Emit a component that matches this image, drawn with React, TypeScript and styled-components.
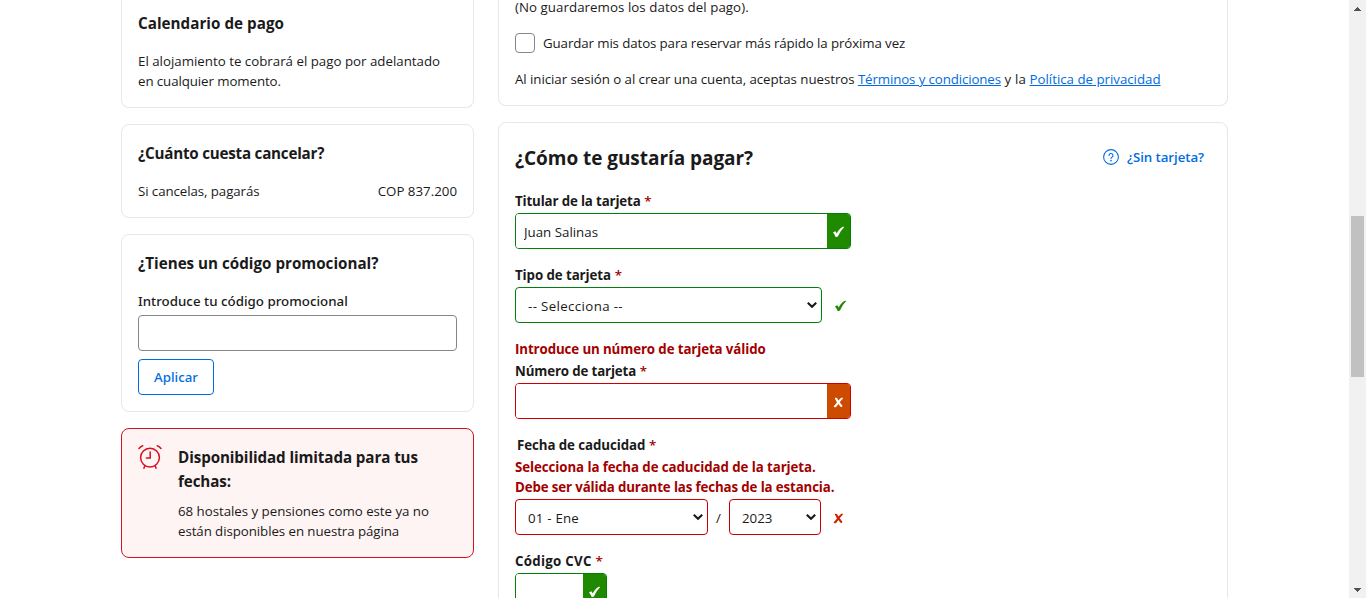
import React from 'react';
import styled, { createGlobalStyle, css } from 'styled-components';

const GREEN = '#008009';
const RED = '#cc0000';
const BLUE = '#006ce4';

const GlobalStyle = createGlobalStyle`
  *, *::before, *::after { box-sizing: border-box; }
  body {
    margin: 0;
    background: #fff;
    color: #1a1a1a;
    font-family: "Open Sans", "Noto Sans", sans-serif;
    font-size: 13.3px;
    line-height: 20px;
  }
  p, h2, h3 { margin: 0; }
`;

type Tracking = { $track?: number };
const tracking = css<Tracking>`
  letter-spacing: ${({ $track = 0 }) => $track}px;
`;

const Viewport = styled.div`
  display: flex;
  height: 598px;
  overflow: hidden;
`;

const Page = styled.main`
  flex: 1;
  display: flex;
  align-items: flex-start;
  gap: 24px;
  padding-left: 121px;
`;

const Sidebar = styled.aside`
  display: flex;
  flex-direction: column;
  gap: 16px;
  width: 353px;
`;

const Content = styled.section`
  display: flex;
  flex-direction: column;
  gap: 16px;
  width: 730px;
`;

const Card = styled.div<{ $cut?: boolean }>`
  padding: 16px;
  border: 1px solid #e7e7e7;
  border-radius: 8px;
  ${({ $cut }) =>
    $cut &&
    css`
      border-top: 0;
      border-top-left-radius: 0;
      border-top-right-radius: 0;
    `}
`;

const ScheduleCard = styled(Card)`
  padding-top: 11px;
`;

const AccountCard = styled(Card)`
  height: 106px;
  padding-top: 0;
`;

const PaymentCard = styled(Card)`
  padding: 21px 23px 16px 16px;
  height: 520px;
`;

const AlertCard = styled(Card)`
  display: flex;
  gap: 16px;
  border-color: #d4111e;
  background: #fff4f4;
`;

const CardTitle = styled.h3<Tracking>`
  margin-bottom: 16px;
  font-size: 15.2px;
  font-weight: 700;
  line-height: 24px;
  ${tracking}
`;

const AlertTitle = styled(CardTitle)`
  margin-bottom: 8px;
`;

const Line = styled.span<Tracking>`
  display: block;
  white-space: nowrap;
  ${tracking}
`;

const Inline = styled.span<Tracking>`
  ${tracking}
`;

const SplitRow = styled.div`
  display: flex;
  justify-content: space-between;
`;

const PromoLabel = styled.label`
  display: block;
  margin-bottom: 4px;
  font-family: "Noto Sans", sans-serif;
  font-weight: 500;
  letter-spacing: 0.02px;
`;

const TextInput = styled.input`
  display: block;
  width: 100%;
  height: 36px;
  padding: 0 8px;
  border: 1px solid #868686;
  border-radius: 4px;
  background: #fff;
  color: inherit;
  font: inherit;
  outline: 0;
`;

const ApplyButton = styled.button`
  display: block;
  width: 76px;
  height: 36px;
  margin-top: 8px;
  padding: 0;
  border: 1px solid ${BLUE};
  border-radius: 4px;
  background: #fff;
  color: ${BLUE};
  font: 500 13.3px/20px "Noto Sans", sans-serif;
`;

const IconSlot = styled.div`
  width: 24px;
  height: 24px;
  flex: none;
  svg { display: block; }
`;

const CheckRow = styled.label`
  display: flex;
  align-items: center;
  gap: 8px;
  margin: 16px 0;
`;

const Checkbox = styled.input`
  appearance: none;
  width: 20px;
  height: 20px;
  margin: 0;
  border: 1px solid #868686;
  border-radius: 4px;
`;

const Reminder = styled.p`
  line-height: 14px;
  margin-bottom: 19px;
  letter-spacing: 0.05px;
`;

const Terms = styled.p`
  white-space: nowrap;
`;

const Link = styled.a<Tracking>`
  color: ${BLUE};
  text-decoration: underline;
  text-underline-offset: 1px;
  ${tracking}
`;

const Header = styled.header`
  display: flex;
  justify-content: space-between;
  align-items: center;
  height: 28px;
  margin-bottom: 19px;
`;

const Heading = styled.h2`
  font-size: 19px;
  line-height: 28px;
  letter-spacing: -0.05px;
`;

const HelpLink = styled.a`
  display: flex;
  align-items: center;
  gap: 8px;
  color: ${BLUE};
  font-weight: 600;
  letter-spacing: -0.08px;
  margin-top: -3px;
`;

const Field = styled.div`
  margin-bottom: 16px;
`;

const Label = styled.label<Tracking & { $inset?: boolean }>`
  display: block;
  margin-bottom: 2px;
  padding-left: ${({ $inset }) => ($inset ? 2 : 0)}px;
  font-weight: 700;
  ${tracking}
`;

const Star = styled.span`
  color: #a30000;
  letter-spacing: 0.3px;
  font-weight: 600;
`;

const ErrorGroup = styled.div`
  margin-bottom: 2px;
`;

const ErrorText = styled.p<Tracking>`
  color: #a30000;
  font-weight: 700;
  white-space: nowrap;
  ${tracking}
`;

const FieldRow = styled.div`
  display: flex;
  align-items: center;
`;

const BadgedInput = styled.div<{ $width: number; $color: string }>`
  display: flex;
  width: ${({ $width }) => $width}px;
  height: 36px;
  overflow: hidden;
  border: 1px solid ${({ $color }) => $color};
  border-radius: 4px;
`;

const BareInput = styled.input`
  flex: 1;
  min-width: 0;
  padding: 2px 8px 0;
  border: 0;
  outline: 0;
  color: inherit;
  font: inherit;
`;

const Badge = styled.span<{ $bg: string }>`
  display: flex;
  align-items: center;
  justify-content: center;
  width: 23px;
  padding-top: 2px;
  background: ${({ $bg }) => $bg};
  color: #fff;
`;

const SelectBox = styled.div<{ $width: number; $color: string }>`
  display: flex;
  align-items: center;
  width: ${({ $width }) => $width}px;
  height: 36px;
  padding-right: 3px;
  border: 1px solid ${({ $color }) => $color};
  border-radius: 4px;
`;

const Select = styled.select<Tracking>`
  appearance: none;
  flex: 1;
  min-width: 0;
  height: 34px;
  padding: 2px 0 0 12px;
  border: 0;
  outline: 0;
  background: none;
  color: inherit;
  font: inherit;
  ${tracking}
`;

const Slash = styled.span`
  width: 21px;
  padding-top: 1px;
  text-align: center;
`;

const Status = styled.span`
  display: flex;
  margin-left: 12px;
  padding-top: 2px;
`;

const Scrollbar = styled.div`
  display: flex;
  flex-direction: column;
  align-items: center;
  width: 17px;
  background: #f1f1f1;
  svg { display: block; flex: none; }
`;

const Thumb = styled.div`
  width: 13px;
  height: 161px;
  margin: 199px 0 auto;
  background: #c1c1c1;
`;

const Check = ({ color }: { color: string }) => (
  <svg width="13" height="12" viewBox="0 0 13 12">
    <path d="M1 6.700C1.800 5.700 3 5.200 3.700 5.600L4.700 7.400C6.200 4.600 8.400 2 10.400 1 11.200.7 11.900.8 12.100 1.200 9.600 3.600 7.700 6.800 6.200 10 5.500 11.200 3.900 11.300 3.400 10.400 2.900 9 2.200 7.600 1 6.700Z" fill={color} />
  </svg>
);

const Cross = ({ color }: { color: string }) => (
  <svg width="11" height="11" viewBox="0 0 11 11">
    <path d="M1.800 1.200C2.800.4 3.800.6 4.300 1.500L5.400 3.600 7.700 1.200C8.600.5 9.700.6 10.300 1.100L6.700 5.300 9.600 9C8.800 10.200 7.600 10.100 7.100 9.300L5.400 6.900 3.300 9.700C2.400 10.700 1 10.400.6 9.500L4 5.400Z" fill={color} />
  </svg>
);

const Chevron = () => (
  <svg width="12" height="8" viewBox="0 0 12 8">
    <path d="M1.800 1.800 6 5.700l4.200-3.900" fill="none" stroke="#1a1a1a" strokeWidth="2.200" />
  </svg>
);

const AlarmClock = () => (
  <svg width="24" height="24" viewBox="0 0 24 24" fill="none" stroke="#d4111e" strokeWidth="1.5" strokeLinecap="round">
    <circle cx="12" cy="12.600" r="9.400" />
    <path d="M12.200 7v6H8.400M6.800 20.800 5.900 23.200M17.200 20.800l.9 2.400M1 3.400C2 2.200 3.300 1.300 4.700.8M19.300.8C20.700 1.300 22 2.200 23 3.400" />
  </svg>
);

const HelpIcon = () => (
  <svg width="16" height="16" viewBox="0 0 24 24" fill="none" stroke={BLUE} strokeWidth="1.600" strokeLinecap="round">
    <circle cx="12" cy="12" r="11.100" />
    <path d="M9 9.800a3 3 0 1 1 4.300 2.600c-.9.4-1.300.9-1.300 1.900" />
    <circle cx="12" cy="17.300" r=".5" fill={BLUE} />
  </svg>
);

const Arrow = ({ down }: { down?: boolean }) => (
  <svg width="17" height="17" viewBox="0 0 17 17" shapeRendering="crispEdges">
    <path d={down ? 'M5 7h7L8.500 11Z' : 'M5 11h7L8.500 7Z'} fill="#505050" />
  </svg>
);

const Required = () => <Star> *</Star>;

export default function App() {
  return (
    <Viewport>
      <GlobalStyle />
      <Page>
        <Sidebar>
          <ScheduleCard $cut>
            <CardTitle $track={0.03}>Calendario de pago</CardTitle>
            <Line>El alojamiento te cobrará el pago por adelantado</Line>
            <Line $track={-0.09}>en cualquier momento.</Line>
          </ScheduleCard>
          <Card>
            <CardTitle $track={-0.23}>¿Cuánto cuesta cancelar?</CardTitle>
            <SplitRow>
              <Line $track={-0.08}>Si cancelas, pagarás</Line>
              <Line>COP 837.200</Line>
            </SplitRow>
          </Card>
          <Card>
            <CardTitle>¿Tienes un código promocional?</CardTitle>
            <PromoLabel htmlFor="promo">Introduce tu código promocional</PromoLabel>
            <TextInput id="promo" />
            <ApplyButton>Aplicar</ApplyButton>
          </Card>
          <AlertCard>
            <IconSlot><AlarmClock /></IconSlot>
            <div>
              <AlertTitle $track={-0.1}>Disponibilidad limitada para tus<br />fechas:</AlertTitle>
              <Line $track={-0.03}>68 hostales y pensiones como este ya no</Line>
              <Line $track={-0.07}>están disponibles en nuestra página</Line>
            </div>
          </AlertCard>
        </Sidebar>
        <Content>
          <AccountCard $cut>
            <Reminder>(No guardaremos los datos del pago).</Reminder>
            <CheckRow>
              <Checkbox type="checkbox" />
              <Line $track={-0.11}>Guardar mis datos para reservar más rápido la próxima vez</Line>
            </CheckRow>
            <Terms>
              <Inline $track={-0.055}>Al iniciar sesión o al crear una cuenta, aceptas nuestros </Inline>
              <Link $track={-0.12}>Términos y condiciones</Link><Inline $track={0.15}> y la </Inline><Link $track={-0.02}>Política de privacidad</Link>
            </Terms>
          </AccountCard>
          <PaymentCard>
            <Header>
              <Heading>¿Cómo te gustaría pagar?</Heading>
              <HelpLink><HelpIcon />¿Sin tarjeta?</HelpLink>
            </Header>
            <Field>
              <Label $track={-0.15}>Titular de la tarjeta<Required /></Label>
              <BadgedInput $width={336} $color={GREEN}>
                <BareInput defaultValue="Juan Salinas" />
                <Badge $bg="#1f8900"><Check color="#fff" /></Badge>
              </BadgedInput>
            </Field>
            <Field>
              <Label $track={-0.08}>Tipo de tarjeta<Required /></Label>
              <FieldRow>
                <SelectBox $width={307} $color={GREEN}>
                  <Select $track={0.36}><option>-- Selecciona --</option></Select>
                  <Chevron />
                </SelectBox>
                <Status><Check color="#1f8900" /></Status>
              </FieldRow>
            </Field>
            <Field>
              <ErrorGroup>
                <ErrorText $track={-0.11}>Introduce un número de tarjeta válido</ErrorText>
              </ErrorGroup>
              <Label $track={-0.14}>Número de tarjeta<Required /></Label>
              <BadgedInput $width={336} $color={RED}>
                <BareInput />
                <Badge $bg="#cc4b00"><Cross color="#fff" /></Badge>
              </BadgedInput>
            </Field>
            <Field>
              <Label $inset $track={-0.08}>Fecha de caducidad<Required /></Label>
              <ErrorGroup>
                <ErrorText $track={-0.08}>Selecciona la fecha de caducidad de la tarjeta.</ErrorText>
                <ErrorText $track={-0.13}>Debe ser válida durante las fechas de la estancia.</ErrorText>
              </ErrorGroup>
              <FieldRow>
                <SelectBox $width={193} $color={RED}>
                  <Select $track={0.2}><option>01 - Ene</option></Select>
                  <Chevron />
                </SelectBox>
                <Slash>/</Slash>
                <SelectBox $width={92} $color={RED}>
                  <Select><option>2023</option></Select>
                  <Chevron />
                </SelectBox>
                <Status><Cross color="#cc2200" /></Status>
              </FieldRow>
            </Field>
            <Field>
              <Label $track={0.28}>Código CVC<Required /></Label>
              <BadgedInput $width={92} $color={GREEN}>
                <BareInput />
                <Badge $bg="#1f8900"><Check color="#fff" /></Badge>
              </BadgedInput>
            </Field>
          </PaymentCard>
        </Content>
      </Page>
      <Scrollbar>
        <Arrow />
        <Thumb />
        <Arrow down />
      </Scrollbar>
    </Viewport>
  );
}
